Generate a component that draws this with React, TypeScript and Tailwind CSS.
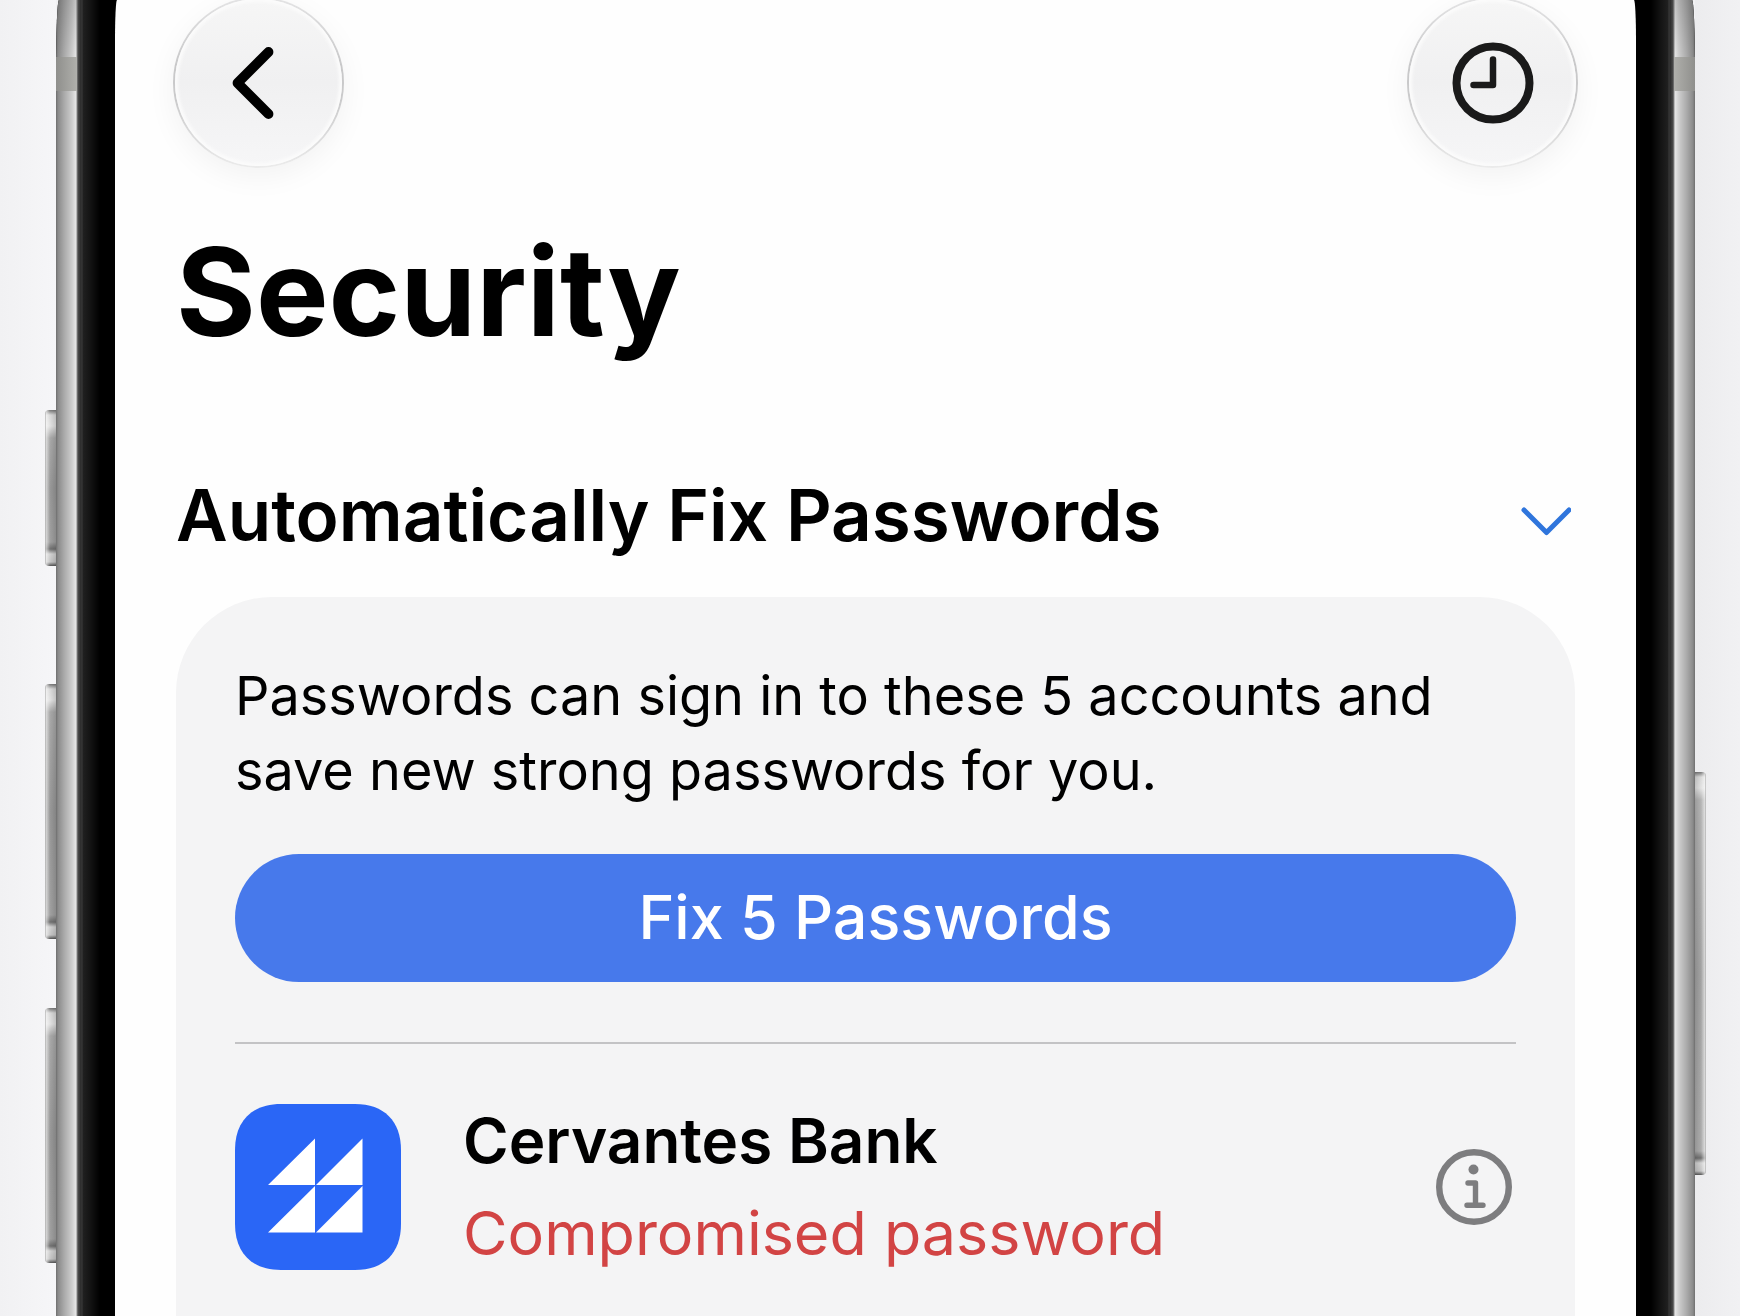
import { useState } from 'react';
import type { ReactNode } from 'react';

interface Account {
  name: string;
  issue: string;
}

const accounts: Account[] = [{ name: 'Cervantes Bank', issue: 'Compromised password' }];

interface RoundButtonProps {
  label: string;
  children: ReactNode;
}

const RoundButton = ({ label, children }: RoundButtonProps) => (
  <button
    type="button"
    aria-label={label}
    className="flex size-[171px] shrink-0 items-center justify-center rounded-full border-2 border-transparent [background:linear-gradient(#f6f6f6,#f0f0f1_50%,#f6f6f7)_padding-box,linear-gradient(#e4e4e5,#c8c8c9_40%,#cacacb_60%,#ebebeb)_border-box] shadow-[inset_0_0_3px_3px_#fbfbfb,0_8px_30px_rgba(0,0,0,0.05)]"
  >
    {children}
  </button>
);

const BackIcon = () => (
  <svg width="42" height="72" viewBox="0 0 42 72" fill="none" aria-hidden="true" className="mr-3">
    <path d="M36.500 5L5.500 36L36.500 67" stroke="#000" strokeWidth="9.800" strokeLinecap="round" strokeLinejoin="round" />
  </svg>
);

const ClockIcon = () => (
  <svg width="82" height="82" viewBox="0 0 82 82" fill="none" aria-hidden="true">
    <circle cx="41" cy="41" r="36.500" stroke="#1a1a1a" strokeWidth="8" />
    <path d="M41 17.500V43H21.500" stroke="#1a1a1a" strokeWidth="6.500" strokeLinecap="round" strokeLinejoin="round" />
  </svg>
);

const ChevronIcon = ({ open }: { open: boolean }) => (
  <svg width="50" height="30" viewBox="0 0 50 30" fill="none" aria-hidden="true" className={open ? '' : '-rotate-90'}>
    <path d="M3 4L25.500 26.500L48 4" stroke="#2f75dc" strokeWidth="5" strokeLinecap="round" strokeLinejoin="round" />
  </svg>
);

const InfoIcon = () => (
  <svg width="76" height="76" viewBox="0 0 76 76" fill="none" aria-hidden="true">
    <circle cx="38" cy="38" r="34.800" stroke="#7d7d7f" strokeWidth="6.400" />
    <circle cx="37.500" cy="20.500" r="5" fill="#7d7d7f" />
    <path d="M32 34H39.500V56.300M31 56.300H47" stroke="#7d7d7f" strokeWidth="5.400" strokeLinecap="round" strokeLinejoin="round" />
  </svg>
);

const BankLogo = () => (
  <svg width="166" height="166" viewBox="0 0 166 166" aria-hidden="true" className="shrink-0">
    <path
      d="M46 0H120C149 0 166 17 166 46V120C166 149 149 166 120 166H46C17 166 0 149 0 120V46C0 17 17 0 46 0Z"
      fill="#2a66f6"
    />
    <path d="M80 34.500V81H33ZM127.500 34.500V81H81ZM80 82V128.500H33ZM127.500 82V128.500H81Z" fill="#fff" />
  </svg>
);

// Metal rim fading into the black glass edge
const LeftBezel = () => (
  <div className="w-[59px] shrink-0 bg-[linear-gradient(to_right,#6e6e6e_0,#8a8a8a_2px,#a9a9a9_8px,#cdcdcd_16px,#e6e6e6_20px,#8a8a8a_21px,#4a4a4a_22px,#2a2a2a_25px,#3c3c3c_26px,#202020_27px,#141414_34px,#000_44px)]">
    <div className="h-[57px] w-[21px] bg-linear-to-b from-black/15 to-transparent" />
    <div className="h-[34px] w-[21px] bg-linear-to-r from-[#8f8f8c] to-[#b0b0ac]" />
  </div>
);

const RightBezel = () => (
  <div className="flex w-[59px] shrink-0 flex-col items-end bg-[linear-gradient(to_left,#6e6e6e_0,#8a8a8a_2px,#a9a9a9_8px,#cdcdcd_16px,#e6e6e6_20px,#8a8a8a_21px,#4a4a4a_22px,#2a2a2a_25px,#3c3c3c_26px,#202020_27px,#141414_34px,#000_44px)]">
    <div className="h-[57px] w-[21px] bg-linear-to-b from-black/15 to-transparent" />
    <div className="h-[34px] w-[21px] bg-linear-to-l from-[#8f8f8c] to-[#b0b0ac]" />
  </div>
);

const leftKey =
  'w-[11px] rounded-l-[4px] bg-[linear-gradient(to_right,#a0a0a0_0,#ffffff99_1px,#ffffff00_5px,#00000022_100%),linear-gradient(to_bottom,#777_0,#d9d9d9_5px,#e2e2e2_16px,#a9a9a9_28px,#989898_50%,#a0a0a0_calc(100%-24px),#707070_calc(100%-17px),#d2d2d2_calc(100%-12px),#c6c6c6_calc(100%-4px),#555_100%)]';
const rightKey =
  'w-[11px] rounded-r-[4px] bg-[linear-gradient(to_left,#a0a0a0_0,#ffffff99_1px,#ffffff00_5px,#00000022_100%),linear-gradient(to_bottom,#777_0,#d9d9d9_5px,#e2e2e2_16px,#b4b4b4_28px,#a2a2a2_50%,#acacac_calc(100%-24px),#707070_calc(100%-17px),#d2d2d2_calc(100%-12px),#c6c6c6_calc(100%-4px),#555_100%)]';

const AccountRow = ({ account }: { account: Account }) => (
  <li className="flex items-center">
    <BankLogo />
    <div className="ml-[62px] min-w-0 flex-1">
      <h3 className="text-[62px] leading-[92px] font-semibold">{account.name}</h3>
      <p className="text-[61px] leading-[92px] text-[#d24444]">{account.issue}</p>
    </div>
    <button type="button" aria-label={`Details for ${account.name}`} className="mr-1 shrink-0">
      <InfoIcon />
    </button>
  </li>
);

export default function App() {
  const [open, setOpen] = useState(true);

  return (
    <div className="flex min-h-screen bg-[#f1f1f3] font-['Inter',sans-serif] text-black">
      {/* Action and volume keys */}
      <div className="flex w-14 shrink-0 flex-col items-end bg-linear-to-r from-[#f1f1f3] to-[#f6f6f8] pt-[410px]">
        <div className={`h-[156px] ${leftKey}`} />
        <div className={`mt-[118px] h-[255px] ${leftKey}`} />
        <div className={`mt-[69px] h-[255px] ${leftKey}`} />
      </div>

      <div className="flex min-w-0 flex-1 overflow-hidden rounded-tl-[3px_70px] rounded-tr-[3px_70px] bg-black">
        <LeftBezel />

        <main className="flex min-w-0 flex-1 flex-col rounded-tl-[2px_40px] rounded-tr-[2px_40px] bg-[#fefefe]">
          <header className="flex h-[168px] items-end justify-between px-[58px]">
            <RoundButton label="Back">
              <BackIcon />
            </RoundButton>
            <RoundButton label="History">
              <ClockIcon />
            </RoundButton>
          </header>

          <div className="flex flex-1 flex-col px-[61px]">
            <h1 className="mt-[48px] text-[122px] leading-[152px] font-bold">Security</h1>

            <section className="mt-[101px] flex flex-1 flex-col">
              <div className="flex items-center justify-between">
                <h2 className="text-[71px] leading-[92px] font-semibold whitespace-nowrap">Automatically Fix Passwords</h2>
                <button
                  type="button"
                  aria-label="Automatically Fix Passwords"
                  aria-expanded={open}
                  onClick={() => setOpen(!open)}
                  className="mr-1 pt-3"
                >
                  <ChevronIcon open={open} />
                </button>
              </div>

              {open && (
                <div className="mt-9 flex-1 rounded-t-[96px] bg-[#f4f4f5] px-[59px] pt-[61px]">
                  <p className="text-[54px] leading-[75px]">
                    Passwords can sign in to these 5 accounts and save new strong passwords for you.
                  </p>
                  <button
                    type="button"
                    className="mt-[46px] h-32 w-full rounded-full bg-[#4779eb] text-[61px] font-medium text-white"
                  >
                    Fix 5 Passwords
                  </button>
                  <ul className="mt-[60px] border-t-2 border-[#c3c3c5] pt-[51px]">
                    {accounts.map((account) => (
                      <AccountRow key={account.name} account={account} />
                    ))}
                  </ul>
                </div>
              )}
            </section>
          </div>
        </main>

        <RightBezel />
      </div>

      {/* Side key */}
      <div className="flex w-[45px] shrink-0 flex-col items-start bg-linear-to-l from-[#f1f1f3] to-[#ececee] pt-[772px]">
        <div className={`h-[403px] ${rightKey}`} />
      </div>
    </div>
  );
}
